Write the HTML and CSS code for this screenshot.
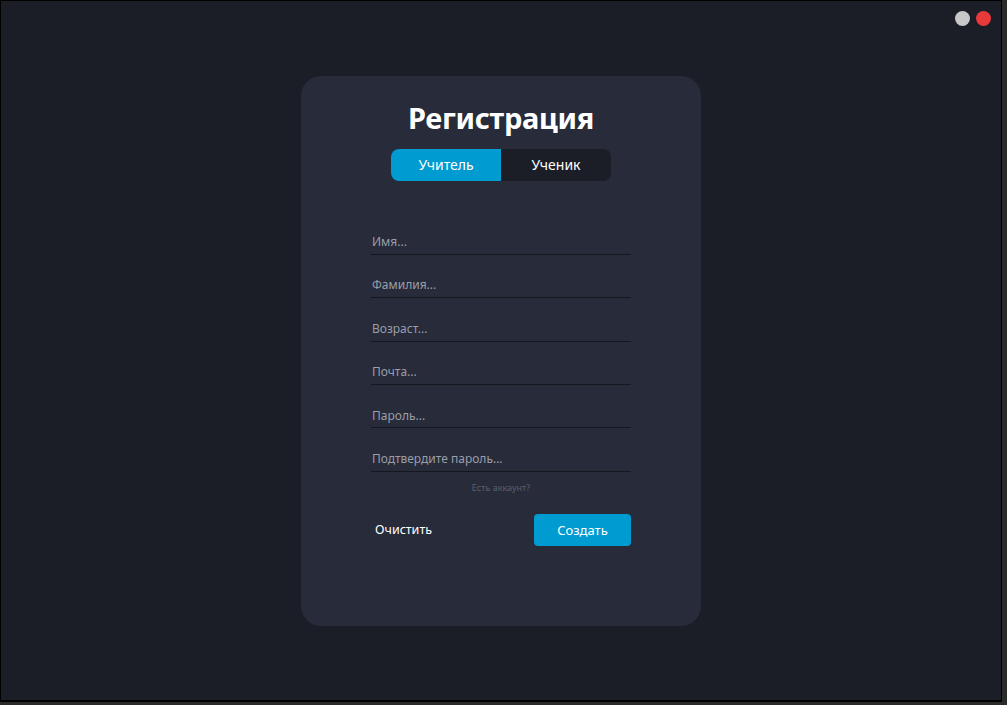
FILE: index.html
```html
<!DOCTYPE html>
<html lang="ru">
<head>
<meta charset="utf-8">
<title>Регистрация</title>
<link rel="stylesheet" href="styles.css">
</head>
<body>
<div class="window">
  <div class="controls">
    <span class="dot dot-gray"></span>
    <span class="dot dot-red"></span>
  </div>
  <div class="card">
    <h1 class="title">Регистрация</h1>
    <div class="toggle">
      <button class="toggle-btn active">Учитель</button>
      <button class="toggle-btn">Ученик</button>
    </div>
    <form class="form">
      <div class="field"><input class="input" placeholder="Имя..."></div>
      <div class="field"><input class="input" placeholder="Фамилия..."></div>
      <div class="field"><input class="input" placeholder="Возраст..."></div>
      <div class="field"><input class="input" placeholder="Почта..."></div>
      <div class="field"><input class="input" placeholder="Пароль..."></div>
      <div class="field"><input class="input" placeholder="Подтвердите пароль..."></div>
      <a class="login-link">Есть аккаунт?</a>
      <div class="actions">
        <button type="button" class="btn-clear">Очистить</button>
        <button type="button" class="btn-create">Создать</button>
      </div>
    </form>
  </div>
</div>
</body>
</html>
```
FILE: styles.css
```css
* { box-sizing: border-box; }
html, body { margin: 0; padding: 0; }
body {
  width: 1007px;
  height: 705px;
  background: #2b2b2b;
  font-family: "Noto Sans", "Open Sans", sans-serif;
  overflow: hidden;
}
.window {
  position: relative;
  width: 1002px;
  height: 702px;
  border: 1px solid #000;
  border-bottom-width: 2px;
  background: #1b1d27;
  display: flex;
  align-items: center;
  justify-content: center;
}
.controls {
  position: absolute;
  top: 10px;
  right: 10px;
  display: flex;
  gap: 6px;
}
.dot {
  width: 15px;
  height: 15px;
  border-radius: 50%;
}
.dot-gray { background: #c8c8c8; }
.dot-red { background: #e83a3a; }
.card {
  width: 400px;
  height: 550px;
  background: #272b3a;
  border-radius: 20px;
  padding-top: 24px;
  display: flex;
  flex-direction: column;
  align-items: center;
}
.title {
  margin: 0;
  font-size: 29px;
  line-height: 36px;
  font-weight: 700;
  color: #ffffff;
  letter-spacing: -0.3px;
}
.toggle {
  margin-top: 13px;
  width: 220px;
  height: 32px;
  border-radius: 8px;
  overflow: hidden;
  display: flex;
  background: #1b1d27;
}
.toggle-btn {
  flex: 1;
  border: 0;
  background: transparent;
  color: #ffffff;
  font-family: inherit;
  font-size: 14px;
  padding: 0;
}
.toggle-btn.active { background: #009bd0; }
.form {
  margin-top: 31px;
  width: 260px;
  display: flex;
  flex-direction: column;
}
.field {
  height: 43.4px;
  border-bottom: 1px solid #15171f;
}
.input {
  width: 100%;
  height: 42.4px;
  border: 0;
  outline: none;
  background: transparent;
  padding: 22px 0 4.4px 1px;
  font-family: inherit;
  font-size: 12px;
  line-height: 16px;
  color: #ffffff;
}
.input::placeholder { color: #9a9ea8; }
.login-link {
  margin-top: 10px;
  text-align: center;
  font-size: 9px;
  line-height: 12px;
  color: #5d616c;
}
.actions {
  margin-top: 20px;
  display: flex;
  justify-content: space-between;
  align-items: center;
}
.btn-clear {
  border: 0;
  background: transparent;
  color: #ffffff;
  font-family: inherit;
  font-size: 12.5px;
  padding: 0 0 0 4px;
  height: 32px;
}
.btn-create {
  width: 97px;
  height: 32px;
  border: 0;
  border-radius: 4px;
  background: #009bd0;
  color: #ffffff;
  font-family: inherit;
  font-size: 13px;
}
```
